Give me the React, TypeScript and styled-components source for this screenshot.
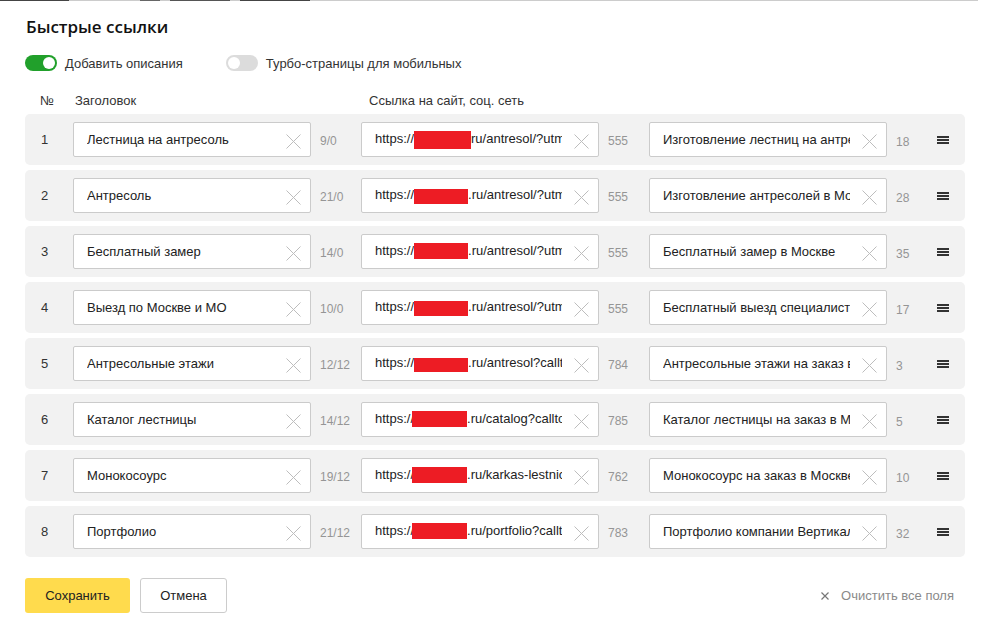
import React from "react";
import styled, { createGlobalStyle } from "styled-components";

const GlobalStyle = createGlobalStyle`
  html, body { margin: 0; padding: 0; background: #fff; }
  body { font-family: "Liberation Sans", Arial, sans-serif; color: #222; }
  * { box-sizing: border-box; }
  svg { display: block; }
`;

const TopStrip = styled.div`
  height: 1px;
  background: linear-gradient(
    to right,
    #444 0 69px,
    #ccc 69px 140px,
    #666 140px 160px,
    #ccc 160px 170px,
    #555 170px 230px,
    #ccc 230px 240px,
    #444 240px 310px,
    #ccc 310px 978px,
    #fff 978px
  );
`;

const Modal = styled.div`
  padding: 0 24px 0 25px;
`;

const Title = styled.h1`
  margin: 14px 0 0 1px;
  font-family: "Open Sans", "Liberation Sans", sans-serif;
  font-weight: 600;
  font-size: 17px;
  line-height: 24px;
  color: #111;
`;

const ToggleRow = styled.div`
  margin-top: 16px;
  display: flex;
  align-items: center;
  gap: 43px;
  height: 16px;
`;

const ToggleItem = styled.label`
  display: flex;
  align-items: center;
  gap: 8px;
  font-size: 13px;
  color: #333;
`;

const Track = styled.span<{ $on: boolean }>`
  position: relative;
  width: 32px;
  height: 16px;
  border-radius: 8px;
  background: ${(p) => (p.$on ? "#21a02b" : "#dcdcdc")};
  display: inline-block;
`;

const Knob = styled.span<{ $on: boolean }>`
  position: absolute;
  top: 2px;
  left: ${(p) => (p.$on ? "18px" : "2px")};
  width: 12px;
  height: 12px;
  border-radius: 50%;
  background: #fff;
`;

const GRID = "32px 238px 50px 238px 50px 238px 50px 12px";

const HeaderRow = styled.div`
  margin-top: 21px;
  display: grid;
  grid-template-columns: ${GRID};
  padding: 0 16px;
  height: 16px;
  align-items: center;
  font-size: 13px;
  color: #333;
`;

const HeadCell = styled.span<{ $shift: number }>`
  margin-left: ${(p) => p.$shift}px;
  white-space: nowrap;
`;

const Rows = styled.div`
  margin-top: 6px;
  display: flex;
  flex-direction: column;
  gap: 5px;
`;

const Row = styled.div`
  display: grid;
  grid-template-columns: ${GRID};
  align-items: center;
  height: 51px;
  padding: 0 16px;
  background: #f2f2f2;
  border-radius: 5px;
`;

const Num = styled.span`
  font-size: 13px;
  color: #333;
`;

const Field = styled.div`
  position: relative;
  height: 35px;
  border: 1px solid #cbcbcb;
  border-radius: 2px;
  background: #fff;
  display: flex;
  align-items: center;
  padding: 0 36px 0 13px;
`;

const FieldText = styled.div`
  flex: 1;
  min-width: 0;
  overflow: hidden;
  white-space: nowrap;
  font-size: 13px;
  color: #222;
`;

const ClearBtn = styled.span`
  position: absolute;
  right: 9px;
  top: 11px;
  width: 15px;
  height: 15px;
  display: block;
`;

const Counter = styled.span<{ $dy?: number }>`
  padding-left: 9px;
  padding-top: ${(p) => p.$dy ?? 2}px;
  font-size: 12px;
  color: #959595;
  white-space: nowrap;
`;

const Redact = styled.span<{ $w: number; $ml: number; $dy: number; $h: number }>`
  display: inline-block;
  width: ${(p) => p.$w}px;
  height: ${(p) => p.$h}px;
  margin-left: ${(p) => p.$ml}px;
  background: #ed1c24;
  vertical-align: middle;
  position: relative;
  top: ${(p) => p.$dy}px;
`;

const Handle = styled.span`
  display: block;
  width: 12px;
  height: 8px;
  margin-top: 1px;
`;

const Footer = styled.div`
  margin-top: 21px;
  display: flex;
  align-items: center;
  padding-right: 11px;
`;

const Button = styled.button<{ $primary?: boolean; $w: number }>`
  width: ${(p) => p.$w}px;
  height: 35px;
  border-radius: 3px;
  font-family: "Liberation Sans", Arial, sans-serif;
  font-size: 13px;
  color: #222;
  cursor: pointer;
  background: ${(p) => (p.$primary ? "#ffdb4d" : "#fff")};
  border: ${(p) => (p.$primary ? "none" : "1px solid #cccccc")};
  margin-right: 10px;
`;

const ClearAll = styled.span`
  margin-left: auto;
  display: flex;
  align-items: center;
  gap: 12px;
  font-size: 13px;
  color: #8a8a8a;
`;

const CrossIcon = ({ size, color, width }: { size: number; color: string; width: number }) => (
  <svg width={size} height={size} viewBox={`0 0 ${size} ${size}`}>
    <path d={`M0.5 0.5L${size - 0.5} ${size - 0.5}M${size - 0.5} 0.5L0.5 ${size - 0.5}`} stroke={color} strokeWidth={width} />
  </svg>
);

type RowData = {
  title: string;
  tc: string;
  pre: string;
  post: string;
  uc: string;
  desc: string;
  dc: string;
  rw: number;
  rml: number;
  rdy: number;
  rh: number;
};

const rows: RowData[] = [
  { title: "Лестница на антресоль", tc: "9/0", pre: "https://", post: "ru/antresol/?utm_source=yandex", uc: "555", desc: "Изготовление лестниц на антресоль", dc: "18", rw: 57, rml: 0, rdy: 0, rh: 18 },
  { title: "Антресоль", tc: "21/0", pre: "https://", post: ".ru/antresol/?utm_source=yandex", uc: "555", desc: "Изготовление антресолей в Москве", dc: "28", rw: 54, rml: 0, rdy: 1, rh: 16 },
  { title: "Бесплатный замер", tc: "14/0", pre: "https://", post: ".ru/antresol/?utm_source=yandex", uc: "555", desc: "Бесплатный замер в Москве", dc: "35", rw: 54, rml: 0, rdy: -1, rh: 17 },
  { title: "Выезд по Москве и МО", tc: "10/0", pre: "https://", post: ".ru/antresol/?utm_source=yandex", uc: "555", desc: "Бесплатный выезд специалиста по Москве", dc: "17", rw: 54, rml: 0, rdy: 1, rh: 16 },
  { title: "Антресольные этажи", tc: "12/12", pre: "https://", post: ".ru/antresol?calltouch", uc: "784", desc: "Антресольные этажи на заказ в Москве", dc: "3", rw: 54, rml: 0, rdy: 1, rh: 15 },
  { title: "Каталог лестницы", tc: "14/12", pre: "https://", post: ".ru/catalog?calltouch", uc: "785", desc: "Каталог лестницы на заказ в Москве", dc: "5", rw: 55, rml: -2, rdy: -2, rh: 18 },
  { title: "Монокосоурс", tc: "19/12", pre: "https://", post: ".ru/karkas-lestnicy?calltouch", uc: "762", desc: "Монокосоурс на заказ в Москве", dc: "10", rw: 55, rml: -2, rdy: -2, rh: 18 },
  { title: "Портфолио", tc: "21/12", pre: "https://", post: ".ru/portfolio?calltouch", uc: "783", desc: "Портфолио компании Вертикаль", dc: "32", rw: 55, rml: -2, rdy: -2, rh: 18 },
];

const Clear = () => (
  <ClearBtn>
    <CrossIcon size={15} color="#bdbdbd" width={1} />
  </ClearBtn>
);

const Toggle = ({ on, label }: { on: boolean; label: string }) => (
  <ToggleItem>
    <Track $on={on}>
      <Knob $on={on} />
    </Track>
    {label}
  </ToggleItem>
);

export default function App() {
  return (
    <>
      <GlobalStyle />
      <TopStrip />
      <Modal>
        <Title>Быстрые ссылки</Title>
        <ToggleRow>
          <Toggle on label="Добавить описания" />
          <Toggle on={false} label="Турбо-страницы для мобильных" />
        </ToggleRow>
        <HeaderRow>
          <HeadCell $shift={-1}>№</HeadCell>
          <HeadCell $shift={2}>Заголовок</HeadCell>
          <span />
          <HeadCell $shift={8}>Ссылка на сайт, соц. сеть</HeadCell>
        </HeaderRow>
        <Rows>
          {rows.map((r, i) => (
            <Row key={i}>
              <Num>{i + 1}</Num>
              <Field>
                <FieldText>{r.title}</FieldText>
                <Clear />
              </Field>
              <Counter>{r.tc}</Counter>
              <Field>
                <FieldText>
                  {r.pre}
                  <Redact $w={r.rw} $ml={r.rml} $dy={r.rdy} $h={r.rh} />
                  {r.post}
                </FieldText>
                <Clear />
              </Field>
              <Counter>{r.uc}</Counter>
              <Field>
                <FieldText>{r.desc}</FieldText>
                <Clear />
              </Field>
              <Counter $dy={5}>{r.dc}</Counter>
              <Handle>
                <svg width="12" height="8" viewBox="0 0 12 8">
                  <rect x="0" y="0" width="12" height="2" fill="#333" />
                  <rect x="0" y="3" width="12" height="2" fill="#333" />
                  <rect x="0" y="6" width="12" height="2" fill="#333" />
                </svg>
              </Handle>
            </Row>
          ))}
        </Rows>
        <Footer>
          <Button $primary $w={105}>Сохранить</Button>
          <Button $w={87}>Отмена</Button>
          <ClearAll>
            <CrossIcon size={8} color="#777" width={1.2} />
            Очистить все поля
          </ClearAll>
        </Footer>
      </Modal>
    </>
  );
}
